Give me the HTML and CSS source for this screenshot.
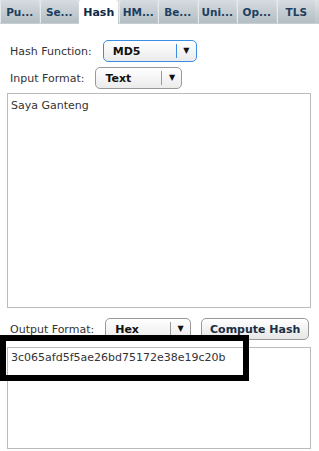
FILE: index.html
```html
<!DOCTYPE html>
<html lang="en">
<head>
    <meta charset="UTF-8">
    <meta name="viewport" content="width=device-width, initial-scale=1.0">
    <title>Hash</title>
    <link rel="stylesheet" href="styles.css">
</head>
<body>
    <div class="tabs">
        <div class="tab">Pu...</div>
        <div class="tab">Se...</div>
        <div class="tab active">Hash</div>
        <div class="tab">HM...</div>
        <div class="tab">Be...</div>
        <div class="tab">Uni...</div>
        <div class="tab">Op...</div>
        <div class="tab">TLS</div>
    </div>

    <div class="panel">
        <div class="row first">
            <span class="label">Hash Function:</span>
            <div class="select focus md5">
                <span class="value">MD5</span>
                <span class="arrow">▼</span>
            </div>
        </div>
        <div class="row">
            <span class="label">Input Format:</span>
            <div class="select text-fmt">
                <span class="value">Text</span>
                <span class="arrow">▼</span>
            </div>
        </div>

        <div class="box input-box">Saya Ganteng</div>

        <div class="row output-row">
            <span class="label">Output Format:</span>
            <div class="select hex">
                <span class="value">Hex</span>
                <span class="arrow">▼</span>
            </div>
            <button class="compute">Compute Hash</button>
        </div>

        <div class="box output-box">3c065afd5f5ae26bd75172e38e19c20b</div>
    </div>

    <!-- marker drawn over the result -->
    <div class="highlight"></div>
</body>
</html>
```

FILE: styles.css
```css
body {
    margin: 0;
    font-family: "DejaVu Sans", Verdana, sans-serif;
    font-size: 11px;
    color: #333;
    background: #fff;
    position: relative;
}

.tabs {
    display: flex;
    height: 23px;
    background: linear-gradient(#dfe3e5, #bcc5ca);
    border-bottom: 1px solid #c9cfd3;
}

.tab {
    width: 38.5px;
    margin-right: 1px;
    display: flex;
    align-items: center;
    justify-content: center;
    font-weight: bold;
    font-size: 10.5px;
    color: #1d3f5e;
    background: linear-gradient(#d6dce0, #b3bec5);
    border-left: 1px solid #e6eaec;
    border-radius: 3px 3px 0 0;
    box-sizing: border-box;
}

.tab.active {
    background: #fff;
    color: #0d2a44;
    height: 24px;
    border-left-color: #fff;
    font-size: 11px;
}

.panel {
    padding: 0 9px 0 7px;
}

.row {
    display: flex;
    align-items: center;
    height: 22px;
    margin-top: 5px;
}

.row.first {
    margin-top: 16px;
}

.label {
    padding-left: 3px;
    margin-right: 11px;
}

.select {
    box-sizing: border-box;
    height: 22px;
    display: flex;
    align-items: center;
    border: 1px solid #999;
    border-radius: 5px;
    background: linear-gradient(#fff, #ebebeb);
    font-weight: bold;
    color: #111;
}

.select .value {
    flex: 1;
    padding-left: 9px;
}

.select .arrow {
    width: 19px;
    text-align: center;
    font-size: 8px;
    border-left: 1px solid #999;
    line-height: 14px;
}

.select.focus {
    border-color: #3c8fe0;
}

.select.focus .arrow {
    border-left-color: #3c8fe0;
}

.md5 { width: 94px; }
.text-fmt { width: 87px; }
.hex { width: 86px; }

.box {
    box-sizing: border-box;
    width: 304px;
    border: 1px solid #bbb;
    padding: 5px 3px;
    color: #333;
}

.input-box {
    height: 215px;
    margin-top: 4px;
}

.output-row {
    margin-top: 10px;
}

.compute {
    margin-left: 10px;
    box-sizing: border-box;
    width: 108px;
    height: 22px;
    border: 1px solid #999;
    border-radius: 5px;
    background: linear-gradient(#fff, #e6e6e6);
    font-family: inherit;
    font-size: 11px;
    font-weight: bold;
    color: #1a2f44;
    padding: 0;
}

.output-box {
    height: 102px;
    margin-top: 7px;
    padding-top: 3px;
}

.highlight {
    position: absolute;
    left: 0;
    top: 335px;
    width: 249px;
    height: 46px;
    box-sizing: border-box;
    border: 6px solid #000;
}
```
